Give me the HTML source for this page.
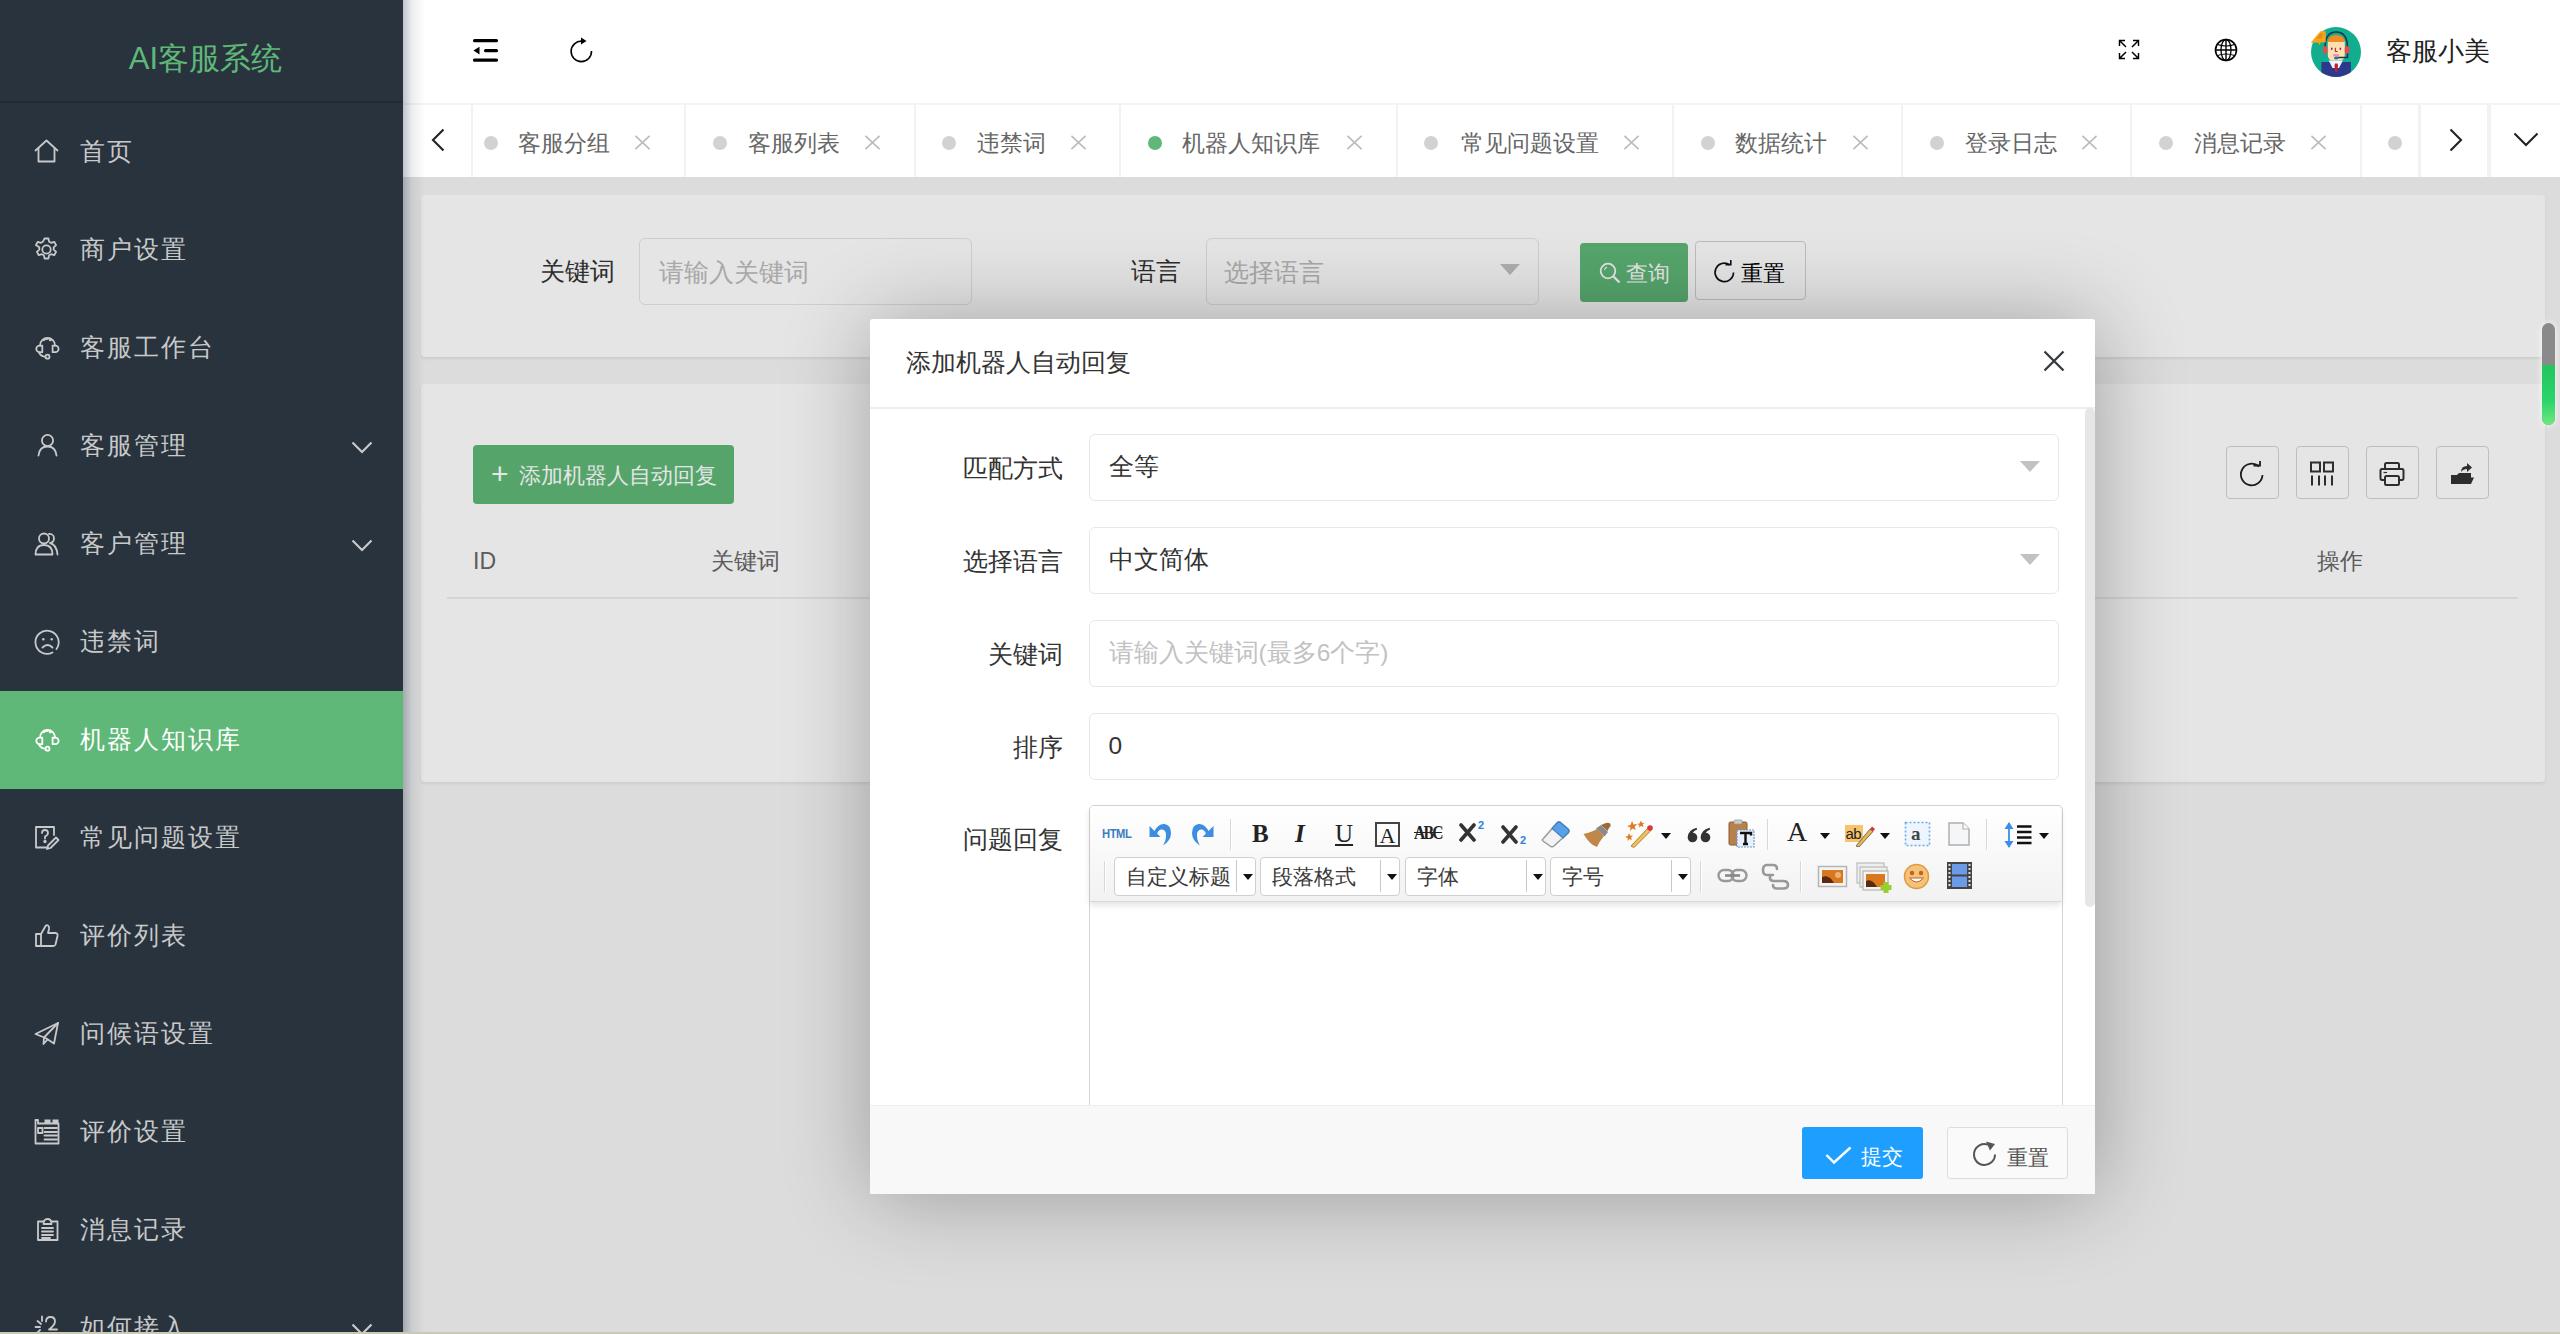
<!DOCTYPE html>
<html><head><meta charset="utf-8">
<style>
*{box-sizing:border-box;margin:0;padding:0}
html,body{width:2560px;height:1334px;overflow:hidden;background:#fff;font-family:"Liberation Sans",sans-serif;color:#333}
.abs{position:absolute}
#side{position:absolute;left:0;top:0;width:403px;height:1332px;background:#28333e;overflow:hidden}
#logo{position:absolute;left:0;top:0;width:403px;height:103px;border-bottom:2px solid #222b34;color:#5fb878;font-size:31px;text-align:center;line-height:117px;padding-left:8px}
.mi{position:absolute;left:0;width:403px;height:98px;color:#c9c9c9;font-size:24.5px;letter-spacing:2px}
.mi .t{position:absolute;left:80px;top:0;line-height:98px}
.mi svg.ic{position:absolute;left:34px;top:36px;width:26px;height:26px}
.mi svg.ar{position:absolute;left:350px;top:44px;width:24px;height:14px}
.mi.on{background:#5fb878;color:#fff}
#bottomline{position:absolute;left:0;top:1332px;width:2560px;height:2px;background:#c9cab6}
#header{position:absolute;left:403px;top:0;width:2157px;height:103px;background:#fff}
#tabs{position:absolute;left:403px;top:103px;width:2157px;height:74px;background:#fff;border-top:2px solid #f4f4f4}
.tab{position:absolute;top:0;height:72px;border-right:2px solid #f2f2f2;color:#666;font-size:23.3px;line-height:76px;white-space:nowrap;overflow:hidden}
.tab .dot{position:absolute;top:31px;width:14px;height:14px;border-radius:50%;background:#d2d2d2}
.tab .dot.g{background:#5fb878}
.tab .tt{position:absolute;top:0}
.tab svg{position:absolute;top:30px;width:17px;height:16px}
#content{position:absolute;left:403px;top:177px;width:2157px;height:1155px;background:#f5f5f5;overflow:hidden}
.card{position:absolute;background:#fff;border-radius:4px;box-shadow:0 2px 3px rgba(0,0,0,.07)}
.lbl{position:absolute;font-size:24.5px;line-height:26px;color:#333;white-space:nowrap}
.inp{position:absolute;background:#fff;border:1.5px solid #e6e6e6;border-radius:6px}
.ph{position:absolute;top:1.5px;line-height:63px;font-size:24.5px;color:#bbb;white-space:nowrap}
.tri{position:absolute;width:0;height:0;border-left:10px solid transparent;border-right:10px solid transparent;border-top:11px solid #c2c2c2}
.btn{position:absolute;border-radius:4px;font-size:21.5px;white-space:nowrap}
.btn span{position:absolute;top:1.5px;line-height:59px}
.btn.g{background:#5fb878;color:#fff}
.btn.w{background:#fff;border:1.5px solid #d2d2d2}
.tool{position:absolute;width:53px;height:53px;border:1.5px solid #d4d4d4;border-radius:4px;background:#fff}
.tool svg{position:absolute;left:12px;top:14px;width:26px;height:26px}
.th{position:absolute;font-size:23px;line-height:26px;color:#666}
#pgscroll{position:absolute;left:2542px;top:323px;width:13px;height:102px;border-radius:7px;background:#8a8a8a;box-shadow:0 0 6px rgba(255,255,255,.9)}
#pgscroll i{position:absolute;left:0;top:42px;width:13px;height:60px;border-radius:0 0 7px 7px;background:linear-gradient(#22c55e,#2bd46a 60%,#6ee87f)}
#modal{position:absolute;left:870px;top:319px;width:1225px;height:875px;background:#fff;border-radius:3px 3px 0 0;box-shadow:2px 2px 87px rgba(0,0,0,.3);overflow:hidden}
.mtitle{position:absolute;left:36px;top:0;line-height:88px;font-size:24.5px;color:#333;white-space:nowrap}
.mline{position:absolute;left:0;top:88px;width:1225px;height:1.5px;background:#eee}
.mscroll{position:absolute;left:1215px;top:89px;width:10px;height:499px;border-radius:5px;background:#e6e6e6}
.flbl{position:absolute;font-size:24.5px;line-height:26px;color:#333;white-space:nowrap}
.sel{position:absolute;left:219px;width:970px;height:67px;border:1.5px solid #e8e8e8;border-radius:6px;background:#fff}
.sel span{position:absolute;left:18.5px;top:0;line-height:63px;font-size:24.5px;color:#333;white-space:nowrap}
.mfoot{position:absolute;left:0;top:786px;width:1225px;height:89px;background:#f8f8f8;border-top:1px solid #eee}
.fbtn{position:absolute;top:21px;width:121px;height:52px;border-radius:3px;font-size:21px}
.fbtn span{position:absolute;top:3px;line-height:54px}
.fbtn.b{background:#1e9fff;color:#fff}
.fbtn.w{background:#fafafa;border:1.5px solid #ddd}
#editor{position:absolute;left:219px;top:486px;width:974px;height:320px;border:1.5px solid #d4d4d4;border-radius:5px;background:#fff}
.etool{position:absolute;left:0;top:0;width:971px;height:96px;background:linear-gradient(#fff,#f2f2f2);border-radius:4px 4px 0 0;box-shadow:0 3px 6px rgba(0,0,0,.12);border-bottom:1.5px solid #d8d8d8}
.esep{position:absolute;width:2px;background:#d8d8d8;border-right:1px solid #fff}
.earr{position:absolute;width:0;height:0;border-left:5px solid transparent;border-right:5px solid transparent;border-top:6px solid #111}
.ehtml{font-family:"Liberation Sans";font-weight:bold;font-size:13px;color:#3a7cc0;line-height:16px;letter-spacing:-0.5px;transform:scaleX(0.86);transform-origin:left}
.eglyph{font-family:"Liberation Serif",serif;font-size:25px;line-height:34px;color:#222}
.ecombo{position:absolute;height:39px;border:1.5px solid #cfcfcf;border-radius:4px;background:#fff}
.ecombo span{position:absolute;left:10.5px;top:0;line-height:37px;font-size:21px;color:#3a3a3a;white-space:nowrap}
.cdiv{position:absolute;top:2px;width:1px;height:32px;background:#c8c8c8}
#shade{position:absolute;left:403px;top:177px;width:2157px;height:1155px;background:rgba(0,0,0,.1)}
#sideshadow{position:absolute;left:403px;top:0;width:22px;height:1332px;background:linear-gradient(to right,rgba(0,21,41,.25),rgba(0,21,41,.08) 40%,rgba(0,21,41,0))}
</style></head><body>

<div id="content">
  <div class="card" style="left:18px;top:18px;width:2124px;height:162px"></div>
  <div class="card" style="left:18px;top:207px;width:2124px;height:398px"></div>
  <div class="lbl" style="left:137px;top:82px">关键词</div>
  <div class="inp" style="left:236px;top:61px;width:333px;height:67px"><span class="ph" style="left:19px">请输入关键词</span></div>
  <div class="lbl" style="left:728px;top:82px">语言</div>
  <div class="inp" style="left:803px;top:61px;width:333px;height:67px"><span class="ph" style="left:17px">选择语言</span><i class="tri" style="left:293px;top:25px"></i></div>
  <div class="btn g" style="left:1177px;top:66px;width:108px;height:59px"><svg style="position:absolute;left:19px;top:19px;width:22px;height:22px" viewBox="0 0 22 22" fill="none" stroke="#fff" stroke-width="1.8"><circle cx="9" cy="9" r="7.3"/><path d="M14.5 14.5 L20.5 20.5" stroke-width="2.4"/><path d="M5.5 8 A3.5 3.5 0 0 1 8 5.2" stroke-width="1.2"/></svg><span style="left:46px">查询</span></div>
  <div class="btn w" style="left:1292px;top:64px;width:111px;height:59px"><svg style="position:absolute;left:17px;top:18px;width:24px;height:24px" viewBox="0 0 24 24" fill="none" stroke="#111" stroke-width="1.7"><path d="M20.5 12.5 A9.2 9.2 0 1 1 16.5 4.8"/><path d="M12.5 4.6 H17.8 V-0.5" stroke-width="1.6"/></svg><span style="left:45px;color:#000;top:2.5px">重置</span></div>
  <div class="btn g" style="left:70px;top:268px;width:261px;height:59px"><span style="left:18px;font-size:30px;top:-1px;font-weight:300">+</span><span style="left:46px;top:1.5px">添加机器人自动回复</span></div>
  <div class="tool" style="left:1823px;top:269px"><svg viewBox="0 0 26 26" fill="none" stroke="#222" stroke-width="1.8"><path d="M23.5 14 A10.8 10.8 0 1 1 20 5.5"/><path d="M14.5 4.5 H21 V-1.5" stroke-width="1.8"/></svg></div>
  <div class="tool" style="left:1893px;top:269px"><svg viewBox="0 0 26 26" fill="none" stroke="#333" stroke-width="2"><rect x="2" y="1.5" width="9" height="9"/><rect x="15" y="1.5" width="9" height="9"/><path d="M3 14.5 V24.5 M10 14.5 V24.5 M16 14.5 V24.5 M23 14.5 V24.5"/></svg></div>
  <div class="tool" style="left:1963px;top:269px"><svg viewBox="0 0 26 26" fill="none" stroke="#333" stroke-width="2"><rect x="6" y="2" width="14" height="6" rx="1.5"/><path d="M6 19 H3 Q1.5 19 1.5 17 V9.5 Q1.5 8 3 8 H23 Q24.5 8 24.5 9.5 V17 Q24.5 19 23 19 H20"/><rect x="6" y="15" width="14" height="9" rx="1.5"/><path d="M4.5 11.5 H8" stroke-width="1.2"/></svg></div>
  <div class="tool" style="left:2033px;top:269px"><svg viewBox="0 0 26 26"><path d="M2 14 H8 L10 12 H22 V23 H2 Z" fill="#333"/><path d="M4.5 23 L7.5 16.5 H25 L22 23 Z" fill="#333"/><path d="M12 11 Q12 5 18 5 V2 L23 6.5 L18 11 V8 Q14 8 12 11 Z" fill="#333"/></svg></div>
  <div class="th" style="left:70px;top:371px">ID</div>
  <div class="th" style="left:308px;top:371px">关键词</div>
  <div class="th" style="left:1914px;top:371px">操作</div>
  <div style="position:absolute;left:44px;top:420px;width:2071px;height:2px;background:#eee"></div>
</div>
<div id="shade"></div>
<div id="pgscroll"><i></i></div>
<div id="modal">
  <div class="mtitle">添加机器人自动回复</div>
  <svg class="abs" style="left:1173px;top:31px;width:22px;height:22px" viewBox="0 0 22 22" fill="none" stroke="#333a40" stroke-width="2.3"><path d="M1.5 1.5 L20.5 20.5 M20.5 1.5 L1.5 20.5"/></svg>
  <div class="mline"></div>
  <div class="mscroll"></div>
  <div class="flbl" style="top:137px;right:1032px">匹配方式</div>
  <div class="sel" style="top:115px"><span>全等</span><i class="tri" style="left:930px;top:26px"></i></div>
  <div class="flbl" style="top:230px;right:1032px">选择语言</div>
  <div class="sel" style="top:208px"><span>中文简体</span><i class="tri" style="left:930px;top:26px"></i></div>
  <div class="flbl" style="top:323px;right:1032px">关键词</div>
  <div class="sel" style="top:301px"><span style="color:#c2c2c2">请输入关键词(最多6个字)</span></div>
  <div class="flbl" style="top:416px;right:1032px">排序</div>
  <div class="sel" style="top:394px"><span>0</span></div>
  <div class="flbl" style="top:508px;right:1032px">问题回复</div>
  <div id="editor"><div class="etool"><div class="abs ehtml" style="left:12px;top:20px">HTML</div>
<svg class="abs" style="left:58px;top:16px;width:24px;height:24px" viewBox="0 0 24 24" ><g fill="#3d8ee0"><path d="M1.5 4 V15 H12.5 Z"/><path d="M6 10 Q10 1.5 16.5 2 Q23 3 23 11 Q23 18.5 15 23.5 Q18.5 17.5 18 12 Q17.5 7.5 13.5 7.5 Q10.5 7.5 9 12 Z"/></g></svg>
<svg class="abs" style="left:101px;top:16px;width:24px;height:24px" viewBox="0 0 24 24" ><g fill="#3d8ee0"><path d="M22.5 4 V15 H11.5 Z"/><path d="M18 10 Q14 1.5 7.5 2 Q1 3 1 11 Q1 18.5 9 23.5 Q5.5 17.5 6 12 Q6.5 7.5 10.5 7.5 Q13.5 7.5 15 12 Z"/></g></svg>
<i class="esep" style="left:140px;top:13px;height:31px"></i>
<div class="abs eglyph" style="left:162px;top:11px;font-weight:bold">B</div>
<div class="abs eglyph" style="left:205px;top:11px;font-weight:bold;font-style:italic">I</div>
<div class="abs eglyph" style="left:245px;top:11px;text-decoration:underline;text-underline-offset:2px">U</div>
<div class="abs eglyph" style="left:285px;top:16px;width:25px;height:25px;border:2px solid #444;font-size:22px;line-height:24px;text-align:center">A</div>
<div class="abs eglyph" style="left:324px;top:10px;font-size:19px;letter-spacing:-2px;font-weight:bold;text-decoration:line-through;transform:scaleX(.82);transform-origin:left">ABC</div>
<svg class="abs" style="left:369px;top:13px;width:27px;height:23px" viewBox="0 0 27 23" ><path d="M2 6 L15 21 M15 6 L2 21" stroke="#333" stroke-width="3.6" stroke-linecap="round"/><text x="19" y="9.5" font-size="11" font-weight="bold" fill="#2f7fd8" font-family="Liberation Sans">2</text></svg>
<svg class="abs" style="left:411px;top:18px;width:28px;height:21px" viewBox="0 0 28 21" ><path d="M2 3 L15 18 M15 3 L2 18" stroke="#333" stroke-width="3.6" stroke-linecap="round"/><text x="19" y="20" font-size="11" font-weight="bold" fill="#2f7fd8" font-family="Liberation Sans">2</text></svg>
<svg class="abs" style="left:450px;top:13px;width:31px;height:29px" viewBox="0 0 31 29" ><path d="M3 20 L17 4 Q19 2 21 4 L28 10 Q30 12 28 14 L14 27 Q12 28.5 10 27 L3 22 Q1.5 21 3 20 Z" fill="#f2f2f2" stroke="#999" stroke-width="1.5"/><path d="M12 9.5 L17 4 Q19 2 21 4 L28 10 Q30 12 28 14 L23 19 Z" fill="#5aa0e8" stroke="#3f7fc0" stroke-width="1.2"/></svg>
<svg class="abs" style="left:492px;top:16px;width:30px;height:26px" viewBox="0 0 30 26" ><path d="M1.5 12 Q10 10 15 7 L22 14 Q17 20 15 25 Q8 23 1.5 12 Z" fill="#c08848"/><path d="M14 6.5 L19 3 L26 10 L22.5 14.5 Z" fill="#8a8a8a"/><path d="M19 3 L24 1 Q27 0 28.5 2 Q29.5 4 27 6 L25.5 9 Z" fill="#9a6a3a"/></svg>
<svg class="abs" style="left:534px;top:13px;width:31px;height:29px" viewBox="0 0 31 29" ><path d="M7 27 L24 9 L27 11.5 L10 28.5 Z" fill="#f0c060" stroke="#b08030" stroke-width="1"/><circle cx="26" cy="9" r="2.8" fill="#e03040"/><path d="M8 2 L9.5 5.5 L13 5 L10.5 8 L12 11 L8.5 9.5 L6 12 L6.5 8.5 L3 7 L6.5 6 Z" fill="#e07a20"/><path d="M5 14 L6.2 16.8 L9 16.5 L7 18.5 L8 21 L5.5 20 L3.5 22 L3.8 19 L1 18 L3.8 17 Z" fill="#e07a20"/><path d="M17 1.5 L18 4 L20.5 3.8 L18.8 5.5 L19.5 8 L17 7 L15 8.5 L15.3 6 L13 5 L15.5 4.5 Z" fill="#e07a20"/></svg>
<i class="earr" style="left:571px;top:27px"></i>
<svg class="abs" style="left:597px;top:21px;width:26px;height:16px" viewBox="0 0 26 16"><circle cx="5.5" cy="10.5" r="4.8" fill="#333"/><path d="M0.8 10.5 Q0.8 3 9.5 0.8 L10.2 2.6 Q5.5 4.5 5.2 8 Z" fill="#333"/><circle cx="18.5" cy="10.5" r="4.8" fill="#333"/><path d="M13.8 10.5 Q13.8 3 22.5 0.8 L23.2 2.6 Q18.5 4.5 18.2 8 Z" fill="#333"/></svg>
<svg class="abs" style="left:638px;top:13px;width:27px;height:29px" viewBox="0 0 27 29" ><rect x="1" y="3" width="18" height="23" rx="1.5" fill="#b8804a" stroke="#8a5a30" stroke-width="1"/><rect x="6" y="1" width="8" height="4" rx="1" fill="#ccc" stroke="#999" stroke-width=".8"/><rect x="9" y="11" width="17" height="17" fill="#e8f0fa" stroke="#6a9ad0" stroke-width="1.2" stroke-dasharray="2 1"/><path d="M12 14 H23 V16.5 M17.5 14 V25 M15 25 H20" stroke="#111" stroke-width="2.4" fill="none"/></svg>
<i class="esep" style="left:677px;top:13px;height:31px"></i>
<div class="abs eglyph" style="left:697px;top:9px;font-size:28px">A</div>
<i class="earr" style="left:730px;top:27px"></i>
<svg class="abs" style="left:755px;top:17px;width:30px;height:24px" viewBox="0 0 30 24" ><rect x="0" y="2" width="18" height="17" fill="#f7c46a"/><text x="0.5" y="16" font-size="15" fill="#222" font-family="Liberation Sans" letter-spacing="-0.5">ab</text><path d="M11 23 L25 6 L28 8.5 L14 24 Z" fill="#e8b850" stroke="#555" stroke-width=".8"/><path d="M25 6 L27 3.5 L30 6 L28 8.5 Z" fill="#e03040"/></svg>
<i class="earr" style="left:790px;top:27px"></i>
<svg class="abs" style="left:814px;top:15px;width:27px;height:26px" viewBox="0 0 27 26" ><rect x="1.5" y="1.5" width="24" height="23" fill="#eef5ff" stroke="#6aaaf0" stroke-width="1.6" stroke-dasharray="2 2"/><text x="7" y="19" font-size="19" font-weight="bold" fill="#444" font-family="Liberation Serif">a</text></svg>
<svg class="abs" style="left:857px;top:15px;width:24px;height:26px" viewBox="0 0 24 26" ><path d="M2 2 H16 L22 8 V24 H2 Z" fill="#f4f6f8" stroke="#b0b0b0" stroke-width="1.5"/><path d="M16 2 V8 H22" fill="#fff" stroke="#b0b0b0" stroke-width="1.2"/></svg>
<i class="esep" style="left:896px;top:13px;height:31px"></i>
<svg class="abs" style="left:913px;top:14px;width:30px;height:30px" viewBox="0 0 30 30" ><path d="M6 3 V27" stroke="#3a8ee6" stroke-width="1.8"/><path d="M1.5 9 L6 2 L10.5 9 Z M1.5 21 L6 28 L10.5 21 Z" fill="#3a8ee6"/><path d="M14 6.5 H28.5 M14 12 H28.5 M14 17.5 H28.5 M14 23 H28.5" stroke="#111" stroke-width="2.4"/></svg>
<i class="earr" style="left:949px;top:27px"></i>
<i class="esep" style="left:14px;top:55px;height:31px"></i>
<div class="ecombo" style="left:24px;top:51px;width:142px"><span>自定义标题</span><i class="cdiv" style="left:121px"></i><i class="earr" style="left:128px;top:16px"></i></div>
<div class="ecombo" style="left:170px;top:51px;width:140px"><span>段落格式</span><i class="cdiv" style="left:119px"></i><i class="earr" style="left:126px;top:16px"></i></div>
<div class="ecombo" style="left:315px;top:51px;width:141px"><span>字体</span><i class="cdiv" style="left:120px"></i><i class="earr" style="left:127px;top:16px"></i></div>
<div class="ecombo" style="left:460px;top:51px;width:141px"><span>字号</span><i class="cdiv" style="left:120px"></i><i class="earr" style="left:127px;top:16px"></i></div>
<i class="esep" style="left:610px;top:55px;height:31px"></i>
<svg class="abs" style="left:627px;top:62px;width:31px;height:16px" viewBox="0 0 31 16" ><rect x="1.5" y="2" width="15" height="11" rx="5.5" fill="none" stroke="#999" stroke-width="2.4"/><rect x="14.5" y="2" width="15" height="11" rx="5.5" fill="none" stroke="#999" stroke-width="2.4"/><path d="M8 7.5 H23" stroke="#888" stroke-width="2.6"/></svg>
<svg class="abs" style="left:671px;top:57px;width:29px;height:27px" viewBox="0 0 29 27" ><path d="M12 12 H6 Q2 12 2 7 Q2 2 6 2 H12 Q16 2 16 6 M9 12 V15 Q9 18 13 18 H22 Q27 18 27 22 Q27 25.5 22 25.5 H16 Q12 25.5 12 22" fill="none" stroke="#999" stroke-width="2.6" stroke-linecap="round"/></svg>
<i class="esep" style="left:710px;top:55px;height:31px"></i>
<svg class="abs" style="left:727px;top:59px;width:31px;height:23px" viewBox="0 0 31 23" ><rect x="1.5" y="1.5" width="28" height="20" fill="#f4f4f4" stroke="#b5b5b5" stroke-width="1.5"/><rect x="5" y="5" width="21" height="13" fill="#d9781f"/><path d="M5 12 Q12 9 17 18 H5 Z" fill="#5a2a10"/><circle cx="21" cy="10" r="3" fill="#f0b070"/></svg>
<svg class="abs" style="left:766px;top:56px;width:36px;height:31px" viewBox="0 0 36 31" ><rect x="1" y="1" width="27" height="20" fill="#eee" stroke="#bbb" stroke-width="1.2"/><rect x="4" y="5" width="27" height="20" fill="#eee" stroke="#bbb" stroke-width="1.2"/><rect x="7" y="9" width="25" height="19" fill="#f4f4f4" stroke="#b5b5b5" stroke-width="1.2"/><rect x="10" y="12" width="19" height="13" fill="#d9781f"/><path d="M10 19 Q16 16 21 25 H10 Z" fill="#5a2a10"/><path d="M30 20 V31 M24.5 25.5 H35.5" stroke="#9acd32" stroke-width="5"/></svg>
<svg class="abs" style="left:813px;top:57px;width:27px;height:27px" viewBox="0 0 27 27" ><circle cx="13.5" cy="13.5" r="12" fill="#f5c27a" stroke="#e09a40" stroke-width="1.5"/><circle cx="9" cy="10" r="2.2" fill="#c0602a"/><circle cx="18" cy="10" r="2.2" fill="#c0602a"/><path d="M6.5 15 Q13.5 23 20.5 15 Z" fill="#fff" stroke="#c0602a" stroke-width="1"/></svg>
<svg class="abs" style="left:856px;top:55px;width:27px;height:29px" viewBox="0 0 27 29" ><rect x="1" y="1" width="25" height="27" fill="#444"/><rect x="6" y="3" width="15" height="10.5" fill="#6a9ae8"/><rect x="6" y="15.5" width="15" height="10.5" fill="#6a9ae8"/><path d="M2.5 4 H4.5 M2.5 8 H4.5 M2.5 12 H4.5 M2.5 16 H4.5 M2.5 20 H4.5 M2.5 24 H4.5 M22.5 4 H24.5 M22.5 8 H24.5 M22.5 12 H24.5 M22.5 16 H24.5 M22.5 20 H24.5 M22.5 24 H24.5" stroke="#ddd" stroke-width="2"/></svg></div></div>
  <div class="mfoot">
    <div class="fbtn b" style="left:932px"><svg style="position:absolute;left:23px;top:19px;width:27px;height:19px" viewBox="0 0 27 19" fill="none" stroke="#fff" stroke-width="2.4"><path d="M1.5 9 L9 16.5 L25.5 1.5"/></svg><span style="left:59px">提交</span></div>
    <div class="fbtn w" style="left:1077px"><svg style="position:absolute;left:23px;top:13px;width:27px;height:27px" viewBox="0 0 27 27" fill="none" stroke="#555" stroke-width="2"><path d="M24 13.5 A10.5 10.5 0 1 1 17 3.6"/><path d="M15 0.5 L24 3 L19 9.5 Z" fill="#555" stroke="none"/></svg><span style="left:59px;color:#555">重置</span></div>
  </div>
</div>

<div id="header"></div>
<svg class="abs" style="left:472px;top:38px;width:28px;height:25px" viewBox="0 0 28 25"><rect x="1" y="1" width="25" height="3.2" rx="1.5" fill="#000"/><rect x="12" y="11" width="14" height="3.2" rx="1.5" fill="#000"/><rect x="1" y="20.5" width="25" height="3.2" rx="1.5" fill="#000"/><path d="M1.5 12.6 L7.5 8.7 V16.5 Z" fill="#000"/></svg>
<svg class="abs" style="left:568px;top:36px;width:28px;height:28px" viewBox="0 0 28 28" fill="none" stroke="#000" stroke-width="1.6"><path d="M23.5 15 A10.2 10.2 0 1 1 14 5.2"/><path d="M13 1.5 L18.5 5 L13 8.5 Z" fill="#000" stroke="none"/></svg>
<svg class="abs" style="left:2118px;top:39px;width:22px;height:21px" viewBox="0 0 22 21" fill="none" stroke="#000" stroke-width="1.45"><path d="M1.5 7 V1.5 H7 M1.5 1.5 L8 8"/><path d="M15 1.5 H20.5 V7 M20.5 1.5 L14 8"/><path d="M1.5 14 V19.5 H7 M1.5 19.5 L8 13"/><path d="M15 19.5 H20.5 V14 M20.5 19.5 L14 13"/></svg>
<svg class="abs" style="left:2214px;top:38px;width:24px;height:24px" viewBox="0 0 24 24" fill="none" stroke="#000" stroke-width="1.6"><circle cx="12" cy="12" r="10.5"/><ellipse cx="12" cy="12" rx="5" ry="10.5" stroke-width="1.3"/><path d="M12 1.5 V22.5 M1.5 12 H22.5" stroke-width="1.4"/><path d="M3.5 6.5 Q12 9.5 20.5 6.5 M3.5 17.5 Q12 14.5 20.5 17.5" stroke-width="1.2"/></svg>
<svg class="abs" style="left:2306px;top:24px;width:58px;height:56px" viewBox="0 0 58 56">
 <circle cx="30" cy="28" r="25" fill="#10ad8f"/>
 <clipPath id="avc"><circle cx="30" cy="28" r="25"/></clipPath>
 <g clip-path="url(#avc)">
  <rect x="15.4" y="38" width="29.5" height="20" fill="#2d3a8c"/>
  <path d="M22.7 36.4 H36.9 L33 44 H26.5 Z" fill="#eef4ff"/>
  <path d="M29 39.5 H31.5 L32 41.5 L31.3 48 H29.2 L28.5 41.5 Z" fill="#c0202e"/>
  <path d="M21.8 17 H38.8 V31 Q38.8 36.5 33 36.5 H27.5 Q21.8 36.5 21.8 31 Z" fill="#fde1b4"/>
  <path d="M21.8 18 Q22 11 30 11 Q38.6 11 38.6 18 Z" fill="#f08a22"/>
  <path d="M19 24 Q19 8 30 8 Q41.5 8 41.5 24 V33.5 H32" fill="none" stroke="#1f3556" stroke-width="1.5"/>
  <rect x="17.1" y="22.3" width="4.2" height="7.3" rx="1.6" fill="#f04650"/>
  <rect x="38.8" y="22.3" width="4.4" height="7.3" rx="1.6" fill="#f04650"/>
  <ellipse cx="25.7" cy="24.8" rx=".8" ry="1.3" fill="#a01828"/><ellipse cx="34.4" cy="24.8" rx=".8" ry="1.3" fill="#a01828"/>
  <path d="M29.3 23.8 V27.5 H31.5" fill="none" stroke="#a01828" stroke-width="1"/>
  <rect x="27.1" y="30.1" width="5.9" height="2.4" fill="#ee92a4"/>
  <ellipse cx="30.3" cy="34" rx="2.3" ry="1.6" fill="#3a68a8"/>
 </g>
 <path d="M14.5 7.2 H19.7 V18.2 L14.5 18.4 L13.7 21.3 L12.3 18.5 L4.7 18.8 Z" fill="#f7a516"/>
 <path d="M13.5 10 L17 9 L16 14 L11 15 Z" fill="#e8891c"/>
</svg>
<div class="abs" style="left:2386px;top:26px;font-size:26px;line-height:50px;color:#222">客服小美</div>

<div id="tabs">
<div class="tab" style="left:70px;width:213px"><i class="dot" style="left:11px"></i><span class="tt" style="left:45px">客服分组</span><svg style="left:161px" viewBox="0 0 17 17" fill="none" stroke="#bbb" stroke-width="1.7"><path d="M1 1 L16 15 M16 1 L1 15"/></svg></div>
<div class="tab" style="left:283px;width:230px"><i class="dot" style="left:27px"></i><span class="tt" style="left:62px">客服列表</span><svg style="left:178px" viewBox="0 0 17 17" fill="none" stroke="#bbb" stroke-width="1.7"><path d="M1 1 L16 15 M16 1 L1 15"/></svg></div>
<div class="tab" style="left:513px;width:205px"><i class="dot" style="left:26px"></i><span class="tt" style="left:61px">违禁词</span><svg style="left:154px" viewBox="0 0 17 17" fill="none" stroke="#bbb" stroke-width="1.7"><path d="M1 1 L16 15 M16 1 L1 15"/></svg></div>
<div class="tab" style="left:718px;width:277px"><i class="dot g" style="left:27px"></i><span class="tt" style="left:61px">机器人知识库</span><svg style="left:225px" viewBox="0 0 17 17" fill="none" stroke="#bbb" stroke-width="1.7"><path d="M1 1 L16 15 M16 1 L1 15"/></svg></div>
<div class="tab" style="left:995px;width:276px"><i class="dot" style="left:26px"></i><span class="tt" style="left:63px">常见问题设置</span><svg style="left:225px" viewBox="0 0 17 17" fill="none" stroke="#bbb" stroke-width="1.7"><path d="M1 1 L16 15 M16 1 L1 15"/></svg></div>
<div class="tab" style="left:1271px;width:229px"><i class="dot" style="left:27px"></i><span class="tt" style="left:61px">数据统计</span><svg style="left:178px" viewBox="0 0 17 17" fill="none" stroke="#bbb" stroke-width="1.7"><path d="M1 1 L16 15 M16 1 L1 15"/></svg></div>
<div class="tab" style="left:1500px;width:229px"><i class="dot" style="left:27px"></i><span class="tt" style="left:62px">登录日志</span><svg style="left:178px" viewBox="0 0 17 17" fill="none" stroke="#bbb" stroke-width="1.7"><path d="M1 1 L16 15 M16 1 L1 15"/></svg></div>
<div class="tab" style="left:1729px;width:230px"><i class="dot" style="left:27px"></i><span class="tt" style="left:62px">消息记录</span><svg style="left:178px" viewBox="0 0 17 17" fill="none" stroke="#bbb" stroke-width="1.7"><path d="M1 1 L16 15 M16 1 L1 15"/></svg></div>
<div class="tab" style="left:1959px;width:58px"><i class="dot" style="left:26px"></i></div>
<div class="tab" style="left:0;width:70px;border-right:2px solid #f2f2f2"><svg style="left:28px;top:23px;width:14px;height:24px" viewBox="0 0 14 24" fill="none" stroke="#222" stroke-width="2.1"><path d="M12.5 1.5 L2 12 L12.5 22.5"/></svg></div>
<div class="tab" style="left:2016px;width:70px;border-left:2px solid #f2f2f2"><svg style="left:28px;top:23px;width:14px;height:24px" viewBox="0 0 14 24" fill="none" stroke="#222" stroke-width="2.1"><path d="M1.5 1.5 L12 12 L1.5 22.5"/></svg></div>
<div class="tab" style="left:2086px;width:71px;border-right:0;border-left:2px solid #f2f2f2"><svg style="left:22px;top:27px;width:26px;height:15px" viewBox="0 0 26 15" fill="none" stroke="#222" stroke-width="2.1"><path d="M1.5 1.5 L13 13 L24.5 1.5"/></svg></div>
</div>

<div id="side">
  <div id="logo">AI客服系统</div>
  <div class="mi" style="top:103px"><svg class="ic" viewBox="0 0 26 26" fill="none" stroke="#c9c9c9" stroke-width="1.8" stroke-linejoin="round" stroke-linecap="round"><path d="M1.5 11.5 L12.5 1.5 L23.5 11.5" /><path d="M4.5 9.5 V22.5 H20.5 V9.5"/></svg><span class="t">首页</span></div>
  <div class="mi" style="top:201px"><svg class="ic" viewBox="0 0 26 26" fill="none" stroke="#c9c9c9" stroke-width="1.8" stroke-linejoin="round" stroke-linecap="round"><circle cx="12.5" cy="12.5" r="4.2"/><path d="M10.6 1.5h3.8l.7 3.2 2 1.1 3.1-1 1.9 3.3-2.4 2.2v2.4l2.4 2.2-1.9 3.3-3.1-1-2 1.1-.7 3.2h-3.8l-.7-3.2-2-1.1-3.1 1-1.9-3.3 2.4-2.2v-2.4L1.9 8.1l1.9-3.3 3.1 1 2-1.1z"/></svg><span class="t">商户设置</span></div>
  <div class="mi" style="top:299px"><svg class="ic" viewBox="0 0 26 26" fill="none" stroke="#c9c9c9" stroke-width="1.8" stroke-linejoin="round" stroke-linecap="round"><path d="M6 10.5 A7.5 7.5 0 0 1 21 10.5"/><path d="M8.3 10.6 V17.2 H5.6 A3.3 3.3 0 0 1 5.6 10.6 Z"/><path d="M18.6 10.6 V17.2 H21.3 A3.3 3.3 0 0 0 21.3 10.6 Z"/><path d="M5 17.5 Q7 21.5 11.5 21.8"/><circle cx="13.5" cy="21.7" r="2"/><path d="M9.6 5.6 Q11.5 4 14 4" stroke-width="1.3"/><circle cx="16.3" cy="4.8" r=".6"/></svg><span class="t">客服工作台</span></div>
  <div class="mi" style="top:397px"><svg class="ic" viewBox="0 0 26 26" fill="none" stroke="#c9c9c9" stroke-width="1.8" stroke-linejoin="round" stroke-linecap="round"><circle cx="13.5" cy="7.5" r="5.6"/><path d="M4.5 22.5 Q5.5 13.5 13.5 13.5 Q21.5 13.5 22.5 22.5"/></svg><span class="t">客服管理</span><svg class="ar" viewBox="0 0 24 14" fill="none" stroke="#c9c9c9" stroke-width="2.2"><path d="M2.5 1.5 L12 11 L21.5 1.5"/></svg></div>
  <div class="mi" style="top:495px"><svg class="ic" viewBox="0 0 26 26" fill="none" stroke="#c9c9c9" stroke-width="1.8" stroke-linejoin="round" stroke-linecap="round"><circle cx="10" cy="7.5" r="5"/><path d="M1.5 23.5 Q1.5 14 10 14 Q18.5 14 18.5 23.5 Z"/><path d="M15 3 A4.5 4.5 0 0 1 16 12 Q22.5 13.5 23.5 23.5"/></svg><span class="t">客户管理</span><svg class="ar" viewBox="0 0 24 14" fill="none" stroke="#c9c9c9" stroke-width="2.2"><path d="M2.5 1.5 L12 11 L21.5 1.5"/></svg></div>
  <div class="mi" style="top:593px"><svg class="ic" viewBox="0 0 26 26" fill="none" stroke="#c9c9c9" stroke-width="1.8" stroke-linejoin="round" stroke-linecap="round"><path d="M18.5 23.5 A11.6 11.6 0 1 1 22.5 20"/><circle cx="9.3" cy="10.2" r="1.2" fill="#c9c9c9" stroke="none"/><circle cx="17.7" cy="10.2" r="1.2" fill="#c9c9c9" stroke="none"/><path d="M8.5 18.5 Q13.5 13.5 18.5 18.5"/></svg><span class="t">违禁词</span></div>
  <div class="mi on" style="top:691px"><svg class="ic" viewBox="0 0 26 26" fill="none" stroke="#fff" stroke-width="1.8" stroke-linejoin="round" stroke-linecap="round"><path d="M6 10.5 A7.5 7.5 0 0 1 21 10.5"/><path d="M8.3 10.6 V17.2 H5.6 A3.3 3.3 0 0 1 5.6 10.6 Z"/><path d="M18.6 10.6 V17.2 H21.3 A3.3 3.3 0 0 0 21.3 10.6 Z"/><path d="M5 17.5 Q7 21.5 11.5 21.8"/><circle cx="13.5" cy="21.7" r="2"/><path d="M9.6 5.6 Q11.5 4 14 4" stroke-width="1.3"/><circle cx="16.3" cy="4.8" r=".6"/></svg><span class="t">机器人知识库</span></div>
  <div class="mi" style="top:789px"><svg class="ic" viewBox="0 0 26 26" fill="none" stroke="#c9c9c9" stroke-width="1.8" stroke-linejoin="round" stroke-linecap="round"><path d="M14 22.5 H2 V2 H20 V10"/><path d="M8 8 Q8 5 11 5 Q14 5 14 8 Q14 10 11 11.5 V13.5"/><circle cx="11" cy="16.5" r=".8"/><path d="M13 24 L14 20.5 L22 12.5 L24.5 15 L16.5 23 Z"/></svg><span class="t">常见问题设置</span></div>
  <div class="mi" style="top:887px"><svg class="ic" viewBox="0 0 26 26" fill="none" stroke="#c9c9c9" stroke-width="1.8" stroke-linejoin="round" stroke-linecap="round"><path d="M2 11 H7 V23 H2 Z"/><path d="M7 11 L11 4 Q12 1.5 14 2.5 Q15.5 3.5 15 6 L14 10 H22 Q24 10.5 23.5 13 L21.5 21.5 Q21 23 19 23 H7"/></svg><span class="t">评价列表</span></div>
  <div class="mi" style="top:985px"><svg class="ic" viewBox="0 0 26 26" fill="none" stroke="#c9c9c9" stroke-width="1.8" stroke-linejoin="round" stroke-linecap="round"><path d="M1.5 13 L24 2 L20 22.5 L11.5 17 Z"/><path d="M24 2 L10 16.5 L9.5 23 L13.5 18.5"/></svg><span class="t">问候语设置</span></div>
  <div class="mi" style="top:1083px"><svg class="ic" viewBox="0 0 26 26" fill="none" stroke="#c9c9c9" stroke-width="1.8" stroke-linejoin="round" stroke-linecap="round"><path d="M1.5 1 V24.5 H24.5 V4.5 H4 V1 Z"/><path d="M10.5 0.5 H16.5 V4 H10.5 Z M18.5 0.5 H24.5 V4 H18.5 Z" fill="#c9c9c9" stroke="none"/><path d="M4 9 H8.5 V14 H4 Z"/><path d="M10.5 9 H23 M10.5 13 H23 M10.5 16.5 H23 M10.5 20.5 H23"/></svg><span class="t">评价设置</span></div>
  <div class="mi" style="top:1181px"><svg class="ic" viewBox="0 0 26 26" fill="none" stroke="#c9c9c9" stroke-width="1.8" stroke-linejoin="round" stroke-linecap="round"><path d="M9.5 4.5 H4 V23 H23.5 V4.5 H17.5"/><path d="M9.5 7 Q9.5 2 13.5 2 Q17.5 2 17.5 7 Z"/><path d="M8 11 H19 M8 14.5 H19 M8 18 H19 M8 21 H16"/></svg><span class="t">消息记录</span></div>
  <div class="mi" style="top:1279px"><svg class="ic" viewBox="0 0 26 26" fill="none" stroke="#c9c9c9" stroke-width="1.8" stroke-linejoin="round" stroke-linecap="round"><path d="M3.5 6 L7 9 M8 1.5 V6 M1.5 12 H6 M6 15 L3 18"/><path d="M12 6.5 Q12 2 16.5 2 Q21 2 21 6.5 Q21 10 15 14.5 H23"/></svg><span class="t">如何接入</span><svg class="ar" viewBox="0 0 24 14" fill="none" stroke="#c9c9c9" stroke-width="2.2"><path d="M2.5 1.5 L12 11 L21.5 1.5"/></svg></div>
</div>
<div id="sideshadow"></div>
<div id="bottomline"></div>
</body></html>
